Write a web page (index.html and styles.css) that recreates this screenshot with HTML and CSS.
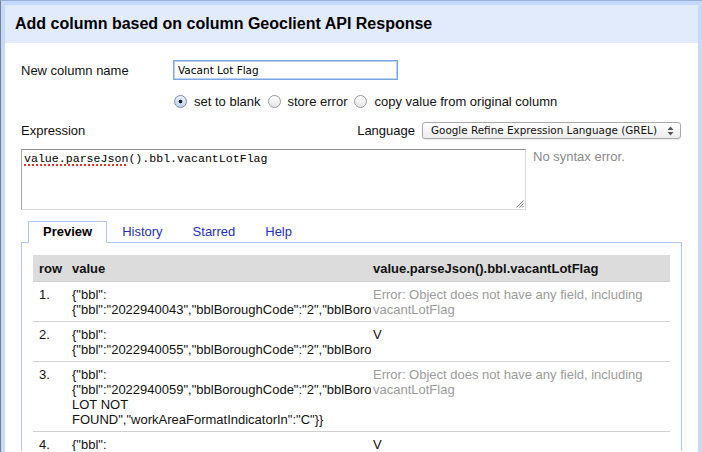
FILE: index.html
```html
<!DOCTYPE html>
<html>
<head>
<meta charset="utf-8">
<link rel="stylesheet" href="styles.css">
</head>
<body>
<div class="frame">
  <div class="dialog">
    <div class="dlg-header">Add column based on column Geoclient API Response</div>
    <div class="dlg-body">
      <div class="name-row">
        <span class="lbl name-lbl">New column name</span>
        <div class="text-input">Vacant Lot Flag</div>
      </div>
      <div class="radio-row">
        <span class="radio on"></span><span>set to blank</span>
        <span class="radio"></span><span>store error</span>
        <span class="radio"></span><span>copy value from original column</span>
      </div>
      <div class="expr-row">
        <span class="lbl">Expression</span>
        <div class="lang">
          <span>Language</span>
          <div class="select">
            <span class="select-text">Google Refine Expression Language (GREL)</span>
            <svg class="select-arrows" width="7" height="10" viewBox="0 0 7 10"><path d="M3.5 0.5 L6.5 4 L0.5 4 Z M3.5 9.5 L6.5 6 L0.5 6 Z" fill="#555"/></svg>
          </div>
        </div>
      </div>
      <div class="editor-row">
        <div class="textarea"><span class="misspelled">value.parseJson</span>().bbl.vacantLotFlag<svg class="grip" width="9" height="9" viewBox="0 0 9 9"><path d="M8.5 1.5 L1.5 8.5 M8.5 4.5 L4.5 8.5 M8.5 7 L7 8.5" stroke="#777" stroke-width="1"/></svg></div>
        <div class="status">No syntax error.</div>
      </div>
      <div class="tabs">
        <span class="tab active">Preview</span>
        <span class="tab">History</span>
        <span class="tab">Starred</span>
        <span class="tab">Help</span>
      </div>
      <div class="panel">
        <table class="preview">
          <colgroup><col class="c1"><col class="c2"><col class="c3"></colgroup>
          <thead>
            <tr><th>row</th><th class="v">value</th><th class="r">value.parseJson().bbl.vacantLotFlag</th></tr>
          </thead>
          <tbody>
            <tr>
              <td>1.</td>
              <td class="v">{"bbl": {"bbl":"2022940043","bblBoroughCode":"2","bblBoroughCodeIn":"2","bblTaxBlock":"02294","bblTaxLot":"0043"}}</td>
              <td class="r err">Error: Object does not have any field, including vacantLotFlag</td>
            </tr>
            <tr>
              <td>2.</td>
              <td class="v">{"bbl": {"bbl":"2022940055","bblBoroughCode":"2","bblBoroughCodeIn":"2","bblTaxBlock":"02294","bblTaxLot":"0055"}}</td>
              <td class="r">V</td>
            </tr>
            <tr>
              <td>3.</td>
              <td class="v">{"bbl": {"bbl":"2022940059","bblBoroughCode":"2","bblBoroughCodeIn":"2","message":"VACANT LOT NOT FOUND","workAreaFormatIndicatorIn":"C"}}</td>
              <td class="r err">Error: Object does not have any field, including vacantLotFlag</td>
            </tr>
            <tr>
              <td>4.</td>
              <td class="v">{"bbl": {"bbl":"2022940062","bblBoroughCode":"2","bblBoroughCodeIn":"2","bblTaxBlock":"02294","bblTaxLot":"0062"}}</td>
              <td class="r">V</td>
            </tr>
          </tbody>
        </table>
      </div>
    </div>
  </div>
</div>
</body>
</html>
```
FILE: styles.css
```css
html, body {
  margin: 0;
  padding: 0;
  height: 100%;
  overflow: hidden;
  background: #ffffff;
}
body {
  font-family: "Liberation Sans", Arial, sans-serif;
  font-size: 13px;
  color: #111;
}
.frame {
  height: 452px;
  box-sizing: border-box;
  border-left: 1px solid #7c808a;
  border-top: 1px solid #97afd9;
  overflow: hidden;
}
.dialog {
  height: 100%;
  box-sizing: border-box;
  border: 4px solid #c3d9ff;
  border-bottom: none;
  background: #fff;
  overflow: hidden;
}
.dlg-header {
  height: 38px;
  box-sizing: border-box;
  padding: 9px 10px 0 10px;
  line-height: 20px;
  background: #e2ebfc;
  font-weight: bold;
  font-size: 16px;
  color: #000;
}
.dlg-body {
  padding: 0 16px;
}
.lbl {
  line-height: 15px;
}
.name-row {
  display: flex;
  align-items: center;
  margin-top: 17px;
  height: 20px;
}
.name-lbl {
  width: 152px;
}
.text-input {
  width: 225px;
  height: 20px;
  box-sizing: border-box;
  border: 1px solid #79a5e2;
  box-shadow: inset 0 0 0 1px #b7d0f4;
  padding-left: 4px;
  line-height: 18px;
  font-family: "DejaVu Sans", sans-serif;
  font-size: 10.5px;
  color: #000;
}
.radio-row {
  display: flex;
  align-items: center;
  gap: 7px;
  margin-top: 13px;
  margin-left: 153px;
  height: 16px;
  line-height: 15px;
}
.radio {
  width: 13px;
  height: 13px;
  box-sizing: border-box;
  border-radius: 50%;
  border: 1px solid #9a9a9a;
  background: linear-gradient(#ffffff, #e4e4e4);
}
.radio.on {
  border-color: #7f8ea6;
  background: radial-gradient(circle at 50% 50%, #1d2430 0, #1d2430 1.6px, transparent 2.2px), linear-gradient(#e9f1fc, #bdd2ee);
}
.expr-row {
  display: flex;
  justify-content: space-between;
  align-items: center;
  margin-top: 13px;
  height: 17px;
}
.lang {
  display: flex;
  align-items: center;
  gap: 7px;
  margin-right: 1px;
}
.select {
  width: 259px;
  height: 17px;
  box-sizing: border-box;
  border: 1px solid #a9a9a9;
  border-radius: 3px;
  background: linear-gradient(#ffffff, #ececec);
  box-shadow: 0 1px 1px rgba(0,0,0,0.08);
  display: flex;
  align-items: center;
  justify-content: space-between;
  padding: 0 6px 0 8px;
  font-family: "DejaVu Sans", sans-serif;
  font-size: 10.4px;
  color: #111;
}
.select-text {
  line-height: 15px;
}
.editor-row {
  display: flex;
  align-items: flex-start;
  margin-top: 10px;
}
.textarea {
  position: relative;
  width: 505px;
  height: 61px;
  box-sizing: border-box;
  border: 1px solid #dadada;
  border-top-color: #8f8f8f;
  border-left-color: #a9a9a9;
  padding: 2px 2px;
  font-family: "Liberation Mono", "Courier New", monospace;
  font-size: 11.6px;
  line-height: 14px;
  color: #000;
}
.misspelled {
  text-decoration: underline dotted #e0332b;
  text-decoration-thickness: 1.5px;
  text-underline-offset: 2px;
}
.grip {
  position: absolute;
  right: 1px;
  bottom: 1px;
}
.status {
  margin-left: 7px;
  line-height: 15px;
  color: #8a8a8a;
}
.tabs {
  display: flex;
  margin-top: 11px;
  margin-left: 7px;
}
.tab {
  position: relative;
  z-index: 1;
  margin-bottom: -1px;
  height: 22px;
  box-sizing: border-box;
  border: 1px solid transparent;
  border-bottom: none;
  padding: 0 14px;
  line-height: 20px;
  color: #2430c4;
}
.tab.active {
  border-color: #b1c8f2;
  background: #fff;
  color: #000;
  font-weight: bold;
}
.panel {
  border: 1px solid #b1c8f2;
  border-bottom: none;
  padding: 12px 11px 0 11px;
  height: 209px;
  box-sizing: border-box;
  overflow: hidden;
}
.preview {
  width: 100%;
  border-collapse: collapse;
  table-layout: fixed;
}
.c1 { width: 33px; }
.c2 { width: 305px; }
.preview th {
  background: #dcdcdc;
  height: 26px;
  padding: 0 6px;
  text-align: left;
  font-weight: bold;
  color: #111;
}
.preview td {
  vertical-align: top;
  padding: 5px 6px 4px 6px;
  border-top: 1px solid #d0d0d0;
  line-height: 15px;
}
.preview .v {
  padding-right: 0;
  overflow: hidden;
}
.preview .r {
  padding-left: 2px;
}
.preview td.err {
  color: #9b9b9b;
}
```
